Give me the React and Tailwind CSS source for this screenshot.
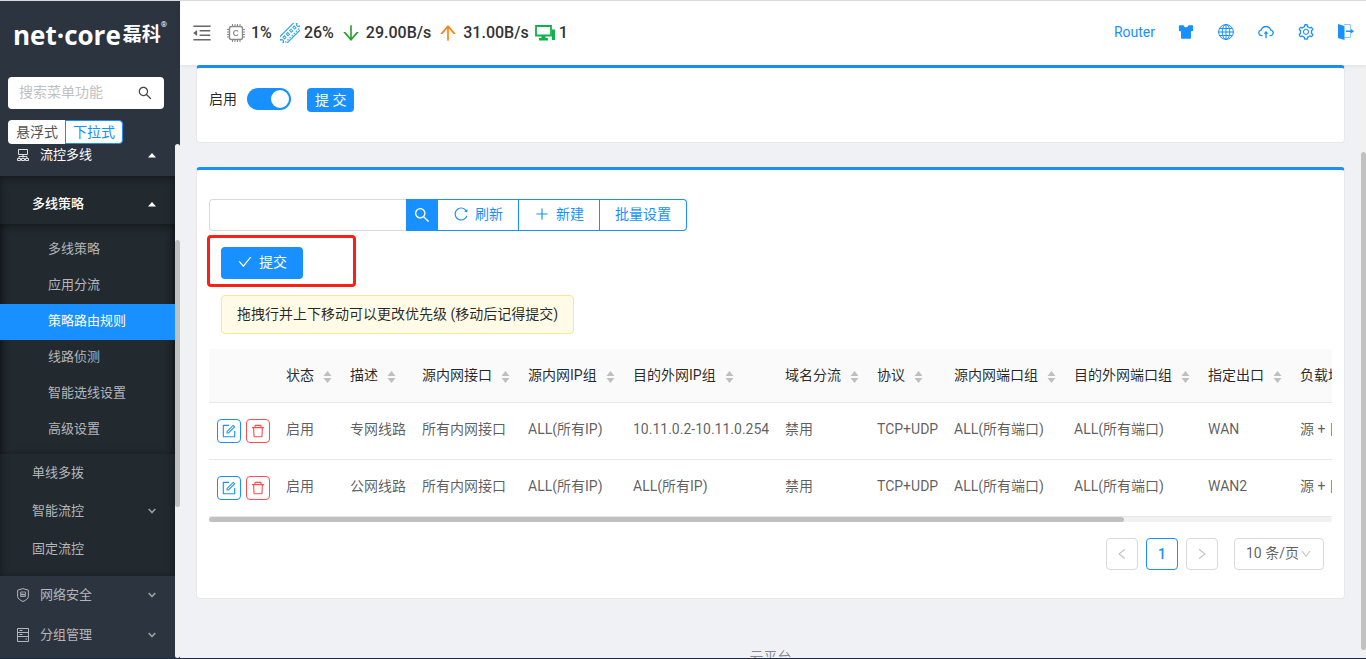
import React, { useState } from 'react';
import {
  AiOutlineSearch, AiOutlineMenuFold, AiOutlineArrowDown, AiOutlineArrowUp, AiFillSkin,
  AiOutlineCloudUpload, AiOutlineSetting, AiOutlineReload, AiOutlinePlus, AiOutlineCheck,
  AiOutlineForm, AiOutlineDelete, AiOutlineLeft, AiOutlineRight, AiOutlineDown,
} from 'react-icons/ai';

const subItems = ['多线策略', '应用分流', '策略路由规则', '线路侦测', '智能选线设置', '高级设置'];

const columns = [
  { key: 'status', title: '状态', width: 'w-[64px]' },
  { key: 'desc', title: '描述', width: 'w-[72px]' },
  { key: 'srcIf', title: '源内网接口', width: 'w-[106px]' },
  { key: 'srcIp', title: '源内网IP组', width: 'w-[105px]' },
  { key: 'dstIp', title: '目的外网IP组', width: 'w-[152px]' },
  { key: 'domain', title: '域名分流', width: 'w-[92px]' },
  { key: 'proto', title: '协议', width: 'w-[77px]' },
  { key: 'srcPort', title: '源内网端口组', width: 'w-[120px]' },
  { key: 'dstPort', title: '目的外网端口组', width: 'w-[134px]' },
  { key: 'out', title: '指定出口', width: 'w-[92px]' },
  { key: 'balance', title: '负载均衡模式', width: 'w-[295px]' },
];

const rules = [
  { id: 1, status: '启用', desc: '专网线路', srcIf: '所有内网接口', srcIp: 'ALL(所有IP)', dstIp: '10.11.0.2-10.11.0.254', domain: '禁用', proto: 'TCP+UDP', srcPort: 'ALL(所有端口)', dstPort: 'ALL(所有端口)', out: 'WAN', balance: '源 + 目的' },
  { id: 2, status: '启用', desc: '公网线路', srcIf: '所有内网接口', srcIp: 'ALL(所有IP)', dstIp: 'ALL(所有IP)', domain: '禁用', proto: 'TCP+UDP', srcPort: 'ALL(所有端口)', dstPort: 'ALL(所有端口)', out: 'WAN2', balance: '源 + 目的' },
];

const ChipIcon = () => (
  <svg width="18" height="18" viewBox="0 0 18 18" fill="none" stroke="#8a8a8a" aria-hidden="true">
    <rect x="2.5" y="2.5" width="13" height="13" rx="2" strokeWidth="1.4" />
    <path d="M5.5 0v2M8 0v2M10.5 0v2M13 0v2M5.5 16v2M8 16v2M10.5 16v2M13 16v2M0 5.5h2M0 8h2M0 10.5h2M0 13h2M16 5.5h2M16 8h2M16 10.5h2M16 13h2" />
    <path d="M11 7.4a2.500 2.500 0 1 0 0 3.200" strokeWidth="1.2" />
  </svg>
);

const MemoryIcon = () => (
  <svg width="20" height="20" viewBox="0 0 20 20" fill="none" stroke="#3aa5e0" aria-hidden="true">
    <g transform="rotate(-45 10 10)">
      <path d="M-1.500 5.500h23v3a1.500 1.500 0 0 0 0 3v3.500h-23v-3.500a1.500 1.500 0 0 0 0-3z" strokeWidth="1.200" />
      <path d="M2 8h2v2.500H2zM6.700 8h2v2.500h-2zM11.400 8h2v2.500h-2zM16 8h2v2.500h-2z" />
      <path d="M0 13.300h20" strokeDasharray="1.500 1.500" strokeWidth="1.200" />
    </g>
  </svg>
);

const MonitorIcon = () => (
  <svg width="20" height="18" viewBox="0 0 20 18" aria-hidden="true">
    <path d="M1 2h15v9.500H1z" fill="none" stroke="#0fb14a" strokeWidth="1.800" />
    <path d="M6.500 12h4v2h2.500v2.500H4V14h2.500zM17 5.500h3V16h-3z" fill="#0fb14a" />
  </svg>
);

const GlobeIcon = () => (
  <svg width="16" height="16" viewBox="0 0 16 16" fill="none" stroke="currentColor" aria-hidden="true">
    <circle cx="8" cy="8" r="7.400" />
    <ellipse cx="8" cy="8" rx="3.800" ry="7.400" />
    <path d="M8 .5v15M.5 8h15M1.600 4.500h12.800M1.600 11.500h12.800" />
  </svg>
);

const ExitIcon = () => (
  <svg width="16" height="16" viewBox="0 0 16 16" aria-hidden="true">
    <path d="M6 .5h6.500V5M12.500 10v3.500H6" fill="none" stroke="#8cc8ff" />
    <path d="M0 0l6.500 2v14L0 14z" fill="currentColor" />
    <path d="M8 6.500h4.500V4.500L16 7.300l-3.500 2.800V8H8z" fill="currentColor" />
  </svg>
);

const NetworkIcon = () => (
  <svg width="12" height="12" viewBox="0 0 12 12" fill="none" stroke="currentColor" aria-hidden="true">
    <path d="M1.500.5h9v5h-9zM6 5.500v3M2 9V7.500h8V9M.5 9.500h3v2h-3zM4.500 9.500h3v2h-3zM8.500 9.500h3v2h-3z" opacity=".85" />
  </svg>
);

const ShieldIcon = () => (
  <svg width="12" height="14" viewBox="0 0 12 14" fill="none" stroke="currentColor" aria-hidden="true">
    <path d="M6 .6l5.400 1.600v6.300c0 2-2.400 3.700-5.400 5-3-1.300-5.400-3-5.400-5V2.200z" />
    <path d="M3.500 4h5v4.500h-5zM5 5v3M7 5.500v2.500M4 6.500h4" strokeWidth=".8" />
  </svg>
);

const CabinetIcon = () => (
  <svg width="12" height="14" viewBox="0 0 12 14" fill="none" stroke="currentColor" aria-hidden="true">
    <path d="M.5.5h11v13H.5zM.5 4.500h11M.5 8.500h11M2.500 2.500h3M2.500 6.500h3M8.500 11h1.500" />
  </svg>
);

const CaretUp = () => (
  <svg width="8" height="5" viewBox="0 0 8 5" fill="currentColor" aria-hidden="true"><path d="M4 0l4 4.500H0z" /></svg>
);

const CaretDown = () => (
  <svg width="8" height="6" viewBox="0 0 8 6" fill="none" stroke="currentColor" strokeWidth="1.800" opacity=".8" aria-hidden="true"><path d="M.7 1L4 4.500 7.300 1" /></svg>
);

const Sorter = () => (
  <svg className="ml-[9px] mt-1" width="9" height="12" viewBox="0 0 9 12" fill="#bfbfbf" aria-hidden="true">
    <path d="M4.500 0L8.500 5h-8zM4.500 12L.5 7h8z" />
  </svg>
);

const Sidebar = () => {
  const [active, setActive] = useState('策略路由规则');

  return (
    <aside className="flex w-[180px] shrink-0 flex-col bg-[#2c343f]">
      {/* Logo */}
      <div className="flex h-[76px] shrink-0 items-start pl-[13px] pt-4 text-white">
        <span className="font-['Open_Sans'] text-[26px] font-bold leading-9">net·core</span>
        <span className="ml-0.5 text-[19px] font-bold leading-9">磊科</span>
        <span className="text-[8px] leading-4">®</span>
      </div>

      <div className="mx-2 mr-4 flex h-8 shrink-0 items-center rounded-sm bg-white px-[11px]">
        <input aria-label="搜索菜单功能" placeholder="搜索菜单功能" className="w-full min-w-0 pb-0.5 text-sm outline-none placeholder:text-[#bfbfbf]" />
        <AiOutlineSearch size={16} className="shrink-0 text-[#444]" />
      </div>

      <div className="ml-2 mt-[11px] flex h-6 shrink-0 text-sm">
        <button className="h-6 rounded-l-sm bg-white pl-2 pr-[7px] leading-[22px] text-[#555]">悬浮式</button>
        <button className="h-6 rounded-r-sm border border-[#1890ff] bg-white px-[7px] leading-[20px] text-[#1890ff]">下拉式</button>
      </div>

      <div className="flex min-h-0 flex-1">
        <nav className="min-w-0 flex-1 overflow-hidden text-[13px] text-[#b3b6ba]">
          <button className="-mt-2 flex h-10 w-full items-center pb-0.5 pl-[17px] pr-[19px] text-white">
            <NetworkIcon />
            <span className="ml-[11px] flex-1 text-left">流控多线</span>
            <CaretUp />
          </button>

          <div className="bg-[#22292f] py-2 shadow-[inset_0_2px_8px_rgba(0,0,0,0.45)]">
            <button className="flex h-10 w-full items-center justify-between pl-8 pr-[19px] font-medium text-white">
              多线策略
              <CaretUp />
            </button>
            <div className="pb-1.5 pt-2 shadow-[inset_0_2px_8px_rgba(0,0,0,0.45)]">
              {subItems.map((item) => (
                <a
                  key={item}
                  href="#"
                  onClick={(e) => { e.preventDefault(); setActive(item); }}
                  className={`block h-9 pl-12 leading-[34px] ${active === item ? 'bg-[#1890ff] text-white' : ''}`}
                >
                  {item}
                </a>
              ))}
            </div>
            <a href="#" className="block h-[38px] pl-8 leading-[38px]">单线多拨</a>
            <button className="flex h-[38px] w-full items-center justify-between pl-8 pr-[19px]">
              智能流控
              <CaretDown />
            </button>
            <a href="#" className="block h-[38px] pl-8 leading-[38px]">固定流控</a>
          </div>

          <button className="flex h-10 w-full items-center pb-0.5 pl-[17px] pr-[19px]">
            <ShieldIcon />
            <span className="ml-[11px] flex-1 text-left">网络安全</span>
            <CaretDown />
          </button>
          <button className="flex h-10 w-full items-center pb-0.5 pl-[17px] pr-[19px]">
            <CabinetIcon />
            <span className="ml-[11px] flex-1 text-left">分组管理</span>
            <CaretDown />
          </button>
        </nav>

        {/* Scroll track */}
        <div className="w-[5px] rounded-sm bg-[#f1f1f1] pt-24">
          <div className="h-[267px] rounded-sm bg-[#c1c1c1]"></div>
        </div>
      </div>
    </aside>
  );
};

const Header = () => (
  <header className="z-10 flex h-16 shrink-0 items-center justify-between bg-white px-[11px] shadow-[0_1px_4px_rgba(0,21,41,0.08)]">
    <div className="flex items-center text-base font-medium text-[#333]">
      <button aria-label="菜单" className="mr-[14px] text-[#666]"><AiOutlineMenuFold size={22} /></button>
      <ChipIcon />
      <span className="ml-1.5 mr-2">1%</span>
      <MemoryIcon />
      <span className="ml-1 mr-1.5">26%</span>
      <AiOutlineArrowDown size={22} className="text-[#2ca02c]" />
      <span className="ml-1 mr-1.5">29.00B/s</span>
      <AiOutlineArrowUp size={22} className="text-[#ff7f0e]" />
      <span className="ml-1 mr-1.5">31.00B/s</span>
      <MonitorIcon />
      <span className="ml-1">1</span>
    </div>
    <div className="flex items-center gap-[22px] pb-0.5 text-[#1890ff]">
      <a href="#" className="text-sm">Router</a>
      <button aria-label="主题"><AiFillSkin size={18} /></button>
      <button aria-label="语言" className="px-px"><GlobeIcon /></button>
      <button aria-label="升级"><AiOutlineCloudUpload size={18} /></button>
      <button aria-label="设置"><AiOutlineSetting size={18} /></button>
      <button aria-label="退出" className="px-px"><ExitIcon /></button>
    </div>
  </header>
);

const RuleTable = () => (
  <div className="mt-[15px]">
    <div className="overflow-hidden">
      <table className="w-[1378px] table-fixed whitespace-nowrap text-left text-sm">
        <thead>
          <tr className="h-[53px] border-b border-[#e8e8e8] bg-[#fafafa] text-black/85">
            <th className="w-[69px]"></th>
            {columns.map((col) => (
              <th key={col.key} className={`px-2 font-normal ${col.width}`}>
                <div className="flex items-center">{col.title}<Sorter /></div>
              </th>
            ))}
          </tr>
        </thead>
        <tbody>
          {rules.map((rule) => (
            <tr key={rule.id} className="h-[57px] border-b border-[#e8e8e8] text-black/65">
              <td className="pl-2">
                <div className="flex gap-[5px]">
                  <button aria-label="编辑" className="flex h-6 w-6 items-center justify-center rounded border border-[#1890ff] text-[#1890ff]"><AiOutlineForm size={16} /></button>
                  <button aria-label="删除" className="flex h-6 w-6 items-center justify-center rounded border border-[#ff4d4f] text-[#ff4d4f]"><AiOutlineDelete size={16} /></button>
                </div>
              </td>
              {columns.map((col) => <td key={col.key} className="px-2 pb-1">{rule[col.key]}</td>)}
            </tr>
          ))}
        </tbody>
      </table>
    </div>
    <div className="h-[5px] rounded-sm bg-[#f1f1f1]">
      <div className="h-full w-[81.5%] rounded-sm bg-[#c1c1c1]"></div>
    </div>
  </div>
);

const Pagination = () => (
  <div className="mr-2 mt-4 flex justify-end gap-2 text-sm">
    <button aria-label="上一页" className="flex h-8 w-8 items-center justify-center rounded border border-[#d9d9d9] text-black/25"><AiOutlineLeft size={14} /></button>
    <button className="h-8 w-8 rounded border border-[#1890ff] font-medium text-[#1890ff]">1</button>
    <button aria-label="下一页" className="flex h-8 w-8 items-center justify-center rounded border border-[#d9d9d9] text-black/25"><AiOutlineRight size={14} /></button>
    <div className="relative ml-2">
      <select aria-label="每页条数" className="h-8 w-[90px] appearance-none rounded border border-[#d9d9d9] bg-white pb-0.5 pl-[11px] text-black/65 outline-none">
        <option>10 条/页</option>
        <option>20 条/页</option>
      </select>
      <AiOutlineDown size={12} className="pointer-events-none absolute right-3 top-2.5 text-black/25" />
    </div>
  </div>
);

export default function App() {
  const [enabled, setEnabled] = useState(true);

  return (
    <div className="flex h-screen overflow-hidden border-b border-t border-b-[#1b2a40] border-t-[#d9dade] bg-[#f0f1f5] font-[Roboto,'Noto_Sans_CJK_SC',sans-serif] text-black/65">
      <Sidebar />
      <div className="flex min-w-0 flex-1 flex-col">
        <Header />
        <div className="flex min-h-0 flex-1">
          <main className="min-w-0 flex-1 overflow-hidden px-4">
            <section className="flex h-[78px] items-start rounded-sm border border-t-[3px] border-[#e8e8e8] border-t-[#1890ff] bg-white px-3 pt-5 text-sm">
              <label htmlFor="enable" className="leading-[22px] text-black/85">启用</label>
              <span className="relative ml-2.5 h-[22px]">
                <input
                  id="enable"
                  type="checkbox"
                  role="switch"
                  checked={enabled}
                  onChange={(e) => setEnabled(e.target.checked)}
                  className="peer h-[22px] w-11 appearance-none rounded-full bg-black/25 checked:bg-[#1890ff]"
                />
                <span className="pointer-events-none absolute left-0.5 top-0.5 h-[18px] w-[18px] rounded-full bg-white peer-checked:left-6"></span>
              </span>
              <button className="ml-4 h-6 rounded bg-[#1890ff] px-2 leading-[22px] text-white">提 交</button>
            </section>

            <section className="mt-6 rounded-sm border border-t-[3px] border-[#e8e8e8] border-t-[#1890ff] bg-white px-3 pb-7 pt-[29px]">
              <div className="flex h-8 text-sm text-[#1890ff]">
                <input aria-label="搜索" className="w-[197px] rounded-l border border-r-0 border-[#d9d9d9] px-3 outline-none" />
                <button aria-label="搜索规则" className="flex w-8 items-center justify-center bg-[#1890ff] text-white"><AiOutlineSearch size={18} /></button>
                <button className="flex w-[81px] items-center justify-center gap-1.5 border-y border-r border-[#1890ff] pb-0.5"><AiOutlineReload size={16} />刷新</button>
                <button className="flex w-[81px] items-center justify-center gap-1.5 border-y border-r border-[#1890ff] pb-0.5"><AiOutlinePlus size={16} />新建</button>
                <button className="w-[87px] rounded-r border-y border-r border-[#1890ff] pb-0.5">批量设置</button>
              </div>

              {/* Submit, framed in red */}
              <div className="relative mt-4 px-3">
                <span className="pointer-events-none absolute -left-0.5 -top-3 h-[52px] w-[149px] rounded-sm border-3 border-[#fb2015]"></span>
                <button className="flex h-8 w-[82px] items-center justify-center gap-1.5 rounded bg-[#1890ff] pb-0.5 text-sm text-white"><AiOutlineCheck size={16} />提交</button>
              </div>

              <div className="ml-3 mt-4 w-fit rounded-sm border border-[#ffe58f] bg-[#fffbe6] px-[15px] py-2 text-sm leading-[21px] text-black/85">
                拖拽行并上下移动可以更改优先级 (移动后记得提交)
              </div>

              <RuleTable />
              <Pagination />
            </section>

            <footer className="mt-12 text-center text-sm text-black/45">云平台</footer>
          </main>

          <div className="w-[5px] bg-[#f1f1f1] pt-[87px]">
            <div className="h-[498px] rounded-sm bg-[#c1c1c1]"></div>
          </div>
        </div>
      </div>
    </div>
  );
}
